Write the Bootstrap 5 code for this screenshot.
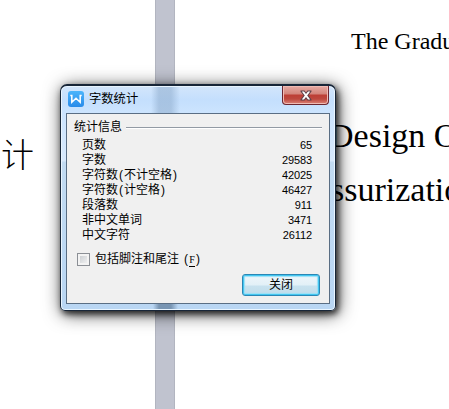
<!DOCTYPE html>
<html lang="zh-CN">
<head>
<meta charset="utf-8">
<meta name="viewport" content="width=device-width, initial-scale=1">
<title>字数统计</title>
<link href="https://cdn.jsdelivr.net/npm/bootstrap@5.3.0/dist/css/bootstrap.min.css" rel="stylesheet">
<style>
body{height:409px;background:#fff;color:#000;font-family:"Liberation Sans","Noto Sans CJK SC",sans-serif;font-size:12px;line-height:15px}
.desk{width:449px;height:409px}
.page-left{width:155px;padding:134px 0 0 1px;font:300 33px/38px "Noto Sans CJK SC",sans-serif}
.gutter{width:20px;background:#c0c3cf;border:solid #b2b5c0;border-width:0 1px}
.page-right{font-family:"Liberation Serif",serif;white-space:nowrap}
.line-a{font-size:24px;line-height:28px;padding:27px 0 0 176px}
.line-b{font-size:34px;line-height:40px;padding:61px 0 0 154px}
.line-c{font-size:34px;line-height:40px;padding:14px 0 0 156px}
.dlg{left:60px;top:84px;width:276px;height:227px;border:1px solid #182638;border-top-width:2px;border-radius:7px 7px 5px 5px;padding:0 5px 6px;
 background:linear-gradient(90deg,transparent 90px,#96b3d3a0 98px,#96b3d3a0 110px,transparent 119px) 0 0/100% 27px no-repeat,linear-gradient(90deg,transparent 92px,#7895b3 98px,#7895b3 110px,transparent 117px) 0 100%/100% 6px no-repeat,linear-gradient(#d3e6fb,#c4dffd 14px,#cce4fe 27px,#d8e9fc 75px,#c2dbf2 76px,#b9d6f3);
 box-shadow:inset 0 0 0 1px #e9f5ff,2px 3px 6px #000b,2px 3px 18px #000b}
.titlebar{height:27px}
.logo{margin:5px 0 0 2px}
.dlg-title{font-size:12.3px;margin:6px 0 0 5px}
.close-btn{width:47px;height:19px;margin-right:1px;border:1px solid #6c2630;border-top:0;border-radius:0 0 4px 4px;background:linear-gradient(#e7aaa3,#d3847b 8px,#bd3e35 9px,#bd483e 13px,#dc8378);box-shadow:inset 0 0 0 1px #f0bbb4}
.client{height:191px;background:#f0f0f0;border:1px solid #5a6e84;padding:6px 7px 0}
.legend-row{height:15px}
.legend-row hr{height:1px;margin:0 0 0 4px;border:0;background:#929aa4;opacity:1;box-shadow:0 1px #fff}
.stats{padding:3px 10px 0 8px}
.stats>div{height:15px}
.num{font-size:11px;letter-spacing:-.1px}
.par{display:inline-block;width:6px;text-align:center}
.check-row{margin-top:9px;padding-left:3px;height:15px}
.form-check-input.chk{width:13px;height:13px;border:1px solid #8b8f95;border-radius:0;background:linear-gradient(135deg,#c3c7cb,#f8f8f8);box-shadow:inset 0 0 0 2px #f3f3f3;margin:0 5px 0 0}
.key{display:inline-block;width:6px;font:10px/12px "Liberation Serif",serif;border-bottom:1px solid #000;text-align:center}
.ok{width:78px;height:22px;margin:7px 2px 0 auto;border:1px solid #2b87b5;border-radius:3px;background:linear-gradient(#eff6fa,#e2f0f7 10px,#c8e2ef 11px,#c0dcea);box-shadow:inset 0 0 0 1px #43c6f0,inset 0 0 1px 2px #9be0f7;font-size:12px;line-height:18px}
</style>
<script src="https://cdn.jsdelivr.net/npm/bootstrap@5.3.0/dist/js/bootstrap.bundle.min.js"></script>
</head>
<body class="overflow-hidden">
<main class="desk d-flex position-relative overflow-hidden">
  <section class="page-left flex-shrink-0">计</section>
  <div class="gutter flex-shrink-0"></div>
  <section class="page-right flex-grow-1 overflow-hidden">
    <div class="line-a">The Gradu</div>
    <div class="line-b">Design O</div>
    <div class="line-c">ssurizatio</div>
  </section>
  <div class="dlg position-absolute" role="dialog">
    <div class="titlebar d-flex align-items-start">
      <svg class="logo" width="16" height="16" viewBox="0 0 16 16"><defs><linearGradient id="g" x2="0" y2="1"><stop stop-color="#4cb5fb"/><stop offset="1" stop-color="#298be9"/></linearGradient></defs><rect width="16" height="16" rx="3" fill="url(#g)"/><path d="M2.3 4.6H3.8v6.6L8 7.2l4.2 4V4.6h1.5" fill="none" stroke="#fff" stroke-width="1.5"/></svg>
      <span class="dlg-title">字数统计</span>
      <button class="close-btn p-0 ms-auto d-flex align-items-center justify-content-center" aria-label="关闭窗口"><svg width="12" height="11" viewBox="0 0 12 11"><path d="M0.5.5h4L6 2.4 7.5.5h4v1L8.4 5.5l3.1 4v1h-4L6 8.6 4.5 10.5h-4v-1l3.1-4L.5 1.5z" fill="#5c414a"/><path d="M1.8 1.5H4l2 2.5 2-2.5h2.2L7.2 5.5l3 4H8L6 7 4 9.500H1.800l3-4z" fill="#fff"/></svg></button>
    </div>
    <div class="client">
      <div class="legend-row d-flex align-items-center"><span>统计信息</span><hr class="flex-grow-1"></div>
      <div class="stats">
        <div class="d-flex justify-content-between"><span>页数</span><span class="num">65</span></div>
        <div class="d-flex justify-content-between"><span>字数</span><span class="num">29583</span></div>
        <div class="d-flex justify-content-between"><span>字符数<span class="par">(</span>不计空格<span class="par">)</span></span><span class="num">42025</span></div>
        <div class="d-flex justify-content-between"><span>字符数<span class="par">(</span>计空格<span class="par">)</span></span><span class="num">46427</span></div>
        <div class="d-flex justify-content-between"><span>段落数</span><span class="num">911</span></div>
        <div class="d-flex justify-content-between"><span>非中文单词</span><span class="num">3471</span></div>
        <div class="d-flex justify-content-between"><span>中文字符</span><span class="num">26112</span></div>
      </div>
      <label class="check-row d-flex align-items-center"><input type="checkbox" class="form-check-input chk"><span>包括脚注和尾注<span class="par ms-1">(</span><span class="key">F</span><span class="par">)</span></span></label>
      <button class="ok d-block p-0">关闭</button>
    </div>
  </div>
</main>
</body>
</html>
